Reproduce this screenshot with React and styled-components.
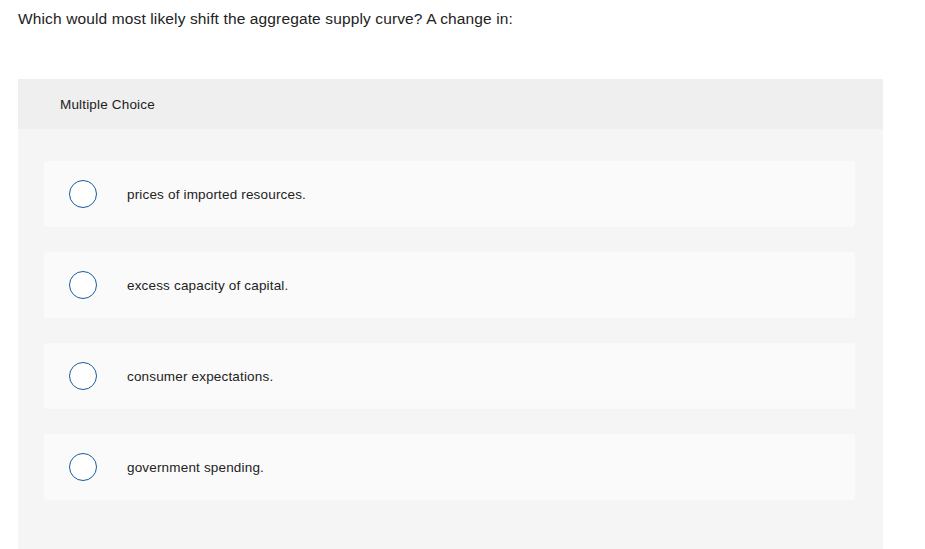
import React from "react";
import styled, { createGlobalStyle } from "styled-components";

const Global = createGlobalStyle`
  html, body {
    margin: 0;
    padding: 0;
    background: #fff;
    height: 549px;
    overflow: hidden;
  }
  body {
    font-family: "Liberation Sans", Arial, sans-serif;
    color: #333;
  }
`;

const Page = styled.div`
  padding: 10px 42px 0 18px;
`;

const Question = styled.p`
  margin: 0;
  font-size: 15.5px;
  letter-spacing: 0.13px;
  line-height: 18px;
  color: #222;
`;

const Panel = styled.div`
  margin-top: 51px;
  background: #f5f5f5;
  height: 470px;
`;

const Header = styled.div`
  height: 50px;
  background: #efefef;
  display: flex;
  align-items: center;
  padding-left: 42px;
  font-size: 13.5px;
  letter-spacing: 0.17px;
  color: #222;
`;

const Options = styled.div`
  display: flex;
  flex-direction: column;
  gap: 25px;
  padding: 32px 28px 0 26px;
`;

const Option = styled.label`
  height: 66px;
  background: #fafafa;
  border-radius: 2px;
  display: flex;
  align-items: center;
  padding-left: 25px;
  cursor: pointer;
`;

const Radio = styled.span`
  width: 26px;
  height: 26px;
  border: 1px solid #1a5b9c;
  border-radius: 50%;
  background: #fff;
  flex-shrink: 0;
`;

const OptionText = styled.span`
  margin-left: 30px;
  font-size: 13.5px;
  letter-spacing: 0.17px;
  color: #222;
`;

const choices = [
  "prices of imported resources.",
  "excess capacity of capital.",
  "consumer expectations.",
  "government spending.",
];

export default function App() {
  return (
    <>
      <Global />
      <Page>
        <Question>
          Which would most likely shift the aggregate supply curve? A change in:
        </Question>
        <Panel>
          <Header>Multiple Choice</Header>
          <Options>
            {choices.map((c) => (
              <Option key={c}>
                <Radio />
                <OptionText>{c}</OptionText>
              </Option>
            ))}
          </Options>
        </Panel>
      </Page>
    </>
  );
}
